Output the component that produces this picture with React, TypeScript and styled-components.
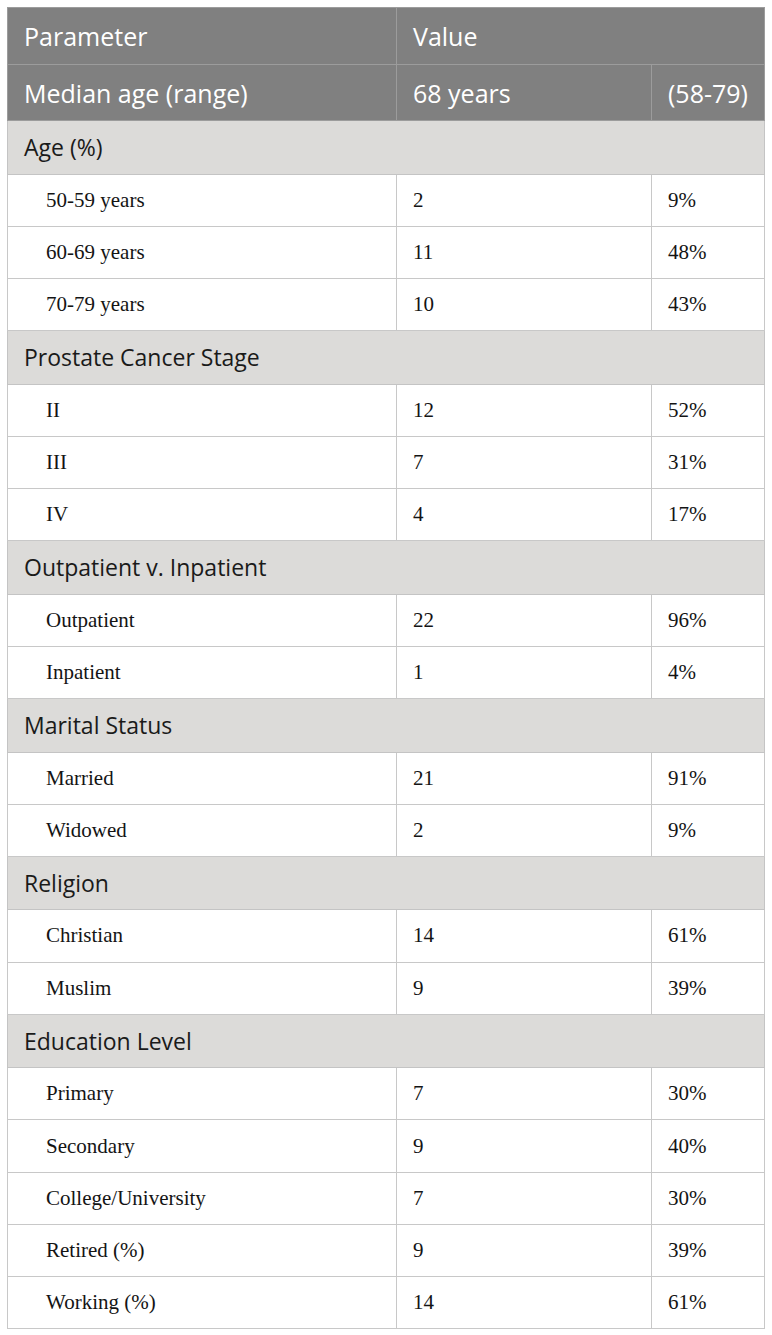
import React from "react";
import styled, { createGlobalStyle } from "styled-components";

const Global = createGlobalStyle`
  html, body { margin: 0; padding: 0; background: #ffffff; }
`;

const Page = styled.div`
  padding: 7px 8px 7px 7px;
  width: 772px;
  box-sizing: border-box;
`;

const Table = styled.table`
  width: 757px;
  border-collapse: collapse;
  table-layout: fixed;
  border: 1px solid #c4c4c4;
`;

const HeadRow = styled.tr<{ $h: number }>`
  height: ${(p) => p.$h}px;
  background: #808080;
`;

const HeadCell = styled.th`
  font-family: "Open Sans", "Noto Sans", sans-serif;
  font-weight: 400;
  font-size: 25px;
  color: #ffffff;
  text-align: left;
  padding: 0 16px;
  border: 1px solid #9c9c9c;
  vertical-align: middle;
  white-space: nowrap;
`;

const GroupRow = styled.tr`
  height: 53.5px;
  background: #dcdbd9;
`;

const GroupCell = styled.td`
  font-family: "Open Sans", "Noto Sans", sans-serif;
  font-size: 23px;
  color: #1a1a1a;
  padding: 0 16px;
  border: 1px solid #c4c4c4;
  vertical-align: middle;
`;

const DataRow = styled.tr`
  height: 52.2px;
  background: #ffffff;
`;

const DataCell = styled.td<{ $indent?: boolean }>`
  font-family: "Liberation Serif", "Times New Roman", serif;
  font-size: 21px;
  color: #141414;
  padding: 0 16px 0 ${(p) => (p.$indent ? 38 : 16)}px;
  border: 1px solid #c8c8c8;
  vertical-align: middle;
  white-space: nowrap;
`;

type Group = { title: string; rows: [string, string, string][] };

const groups: Group[] = [
  {
    title: "Age (%)",
    rows: [
      ["50-59 years", "2", "9%"],
      ["60-69 years", "11", "48%"],
      ["70-79 years", "10", "43%"],
    ],
  },
  {
    title: "Prostate Cancer Stage",
    rows: [
      ["II", "12", "52%"],
      ["III", "7", "31%"],
      ["IV", "4", "17%"],
    ],
  },
  {
    title: "Outpatient v. Inpatient",
    rows: [
      ["Outpatient", "22", "96%"],
      ["Inpatient", "1", "4%"],
    ],
  },
  {
    title: "Marital Status",
    rows: [
      ["Married", "21", "91%"],
      ["Widowed", "2", "9%"],
    ],
  },
  {
    title: "Religion",
    rows: [
      ["Christian", "14", "61%"],
      ["Muslim", "9", "39%"],
    ],
  },
  {
    title: "Education Level",
    rows: [
      ["Primary", "7", "30%"],
      ["Secondary", "9", "40%"],
      ["College/University", "7", "30%"],
      ["Retired (%)", "9", "39%"],
      ["Working (%)", "14", "61%"],
    ],
  },
];

export default function App() {
  return (
    <Page>
      <Global />
      <Table>
        <colgroup>
          <col style={{ width: 389 }} />
          <col style={{ width: 255 }} />
          <col style={{ width: 113 }} />
        </colgroup>
        <thead>
          <HeadRow $h={57}>
            <HeadCell>Parameter</HeadCell>
            <HeadCell colSpan={2}>Value</HeadCell>
          </HeadRow>
          <HeadRow $h={56}>
            <HeadCell>Median age (range)</HeadCell>
            <HeadCell>68 years</HeadCell>
            <HeadCell>(58-79)</HeadCell>
          </HeadRow>
        </thead>
        <tbody>
          {groups.map((g) => (
            <React.Fragment key={g.title}>
              <GroupRow>
                <GroupCell colSpan={3}>{g.title}</GroupCell>
              </GroupRow>
              {g.rows.map((r) => (
                <DataRow key={r[0]}>
                  <DataCell $indent>{r[0]}</DataCell>
                  <DataCell>{r[1]}</DataCell>
                  <DataCell>{r[2]}</DataCell>
                </DataRow>
              ))}
            </React.Fragment>
          ))}
        </tbody>
      </Table>
    </Page>
  );
}
